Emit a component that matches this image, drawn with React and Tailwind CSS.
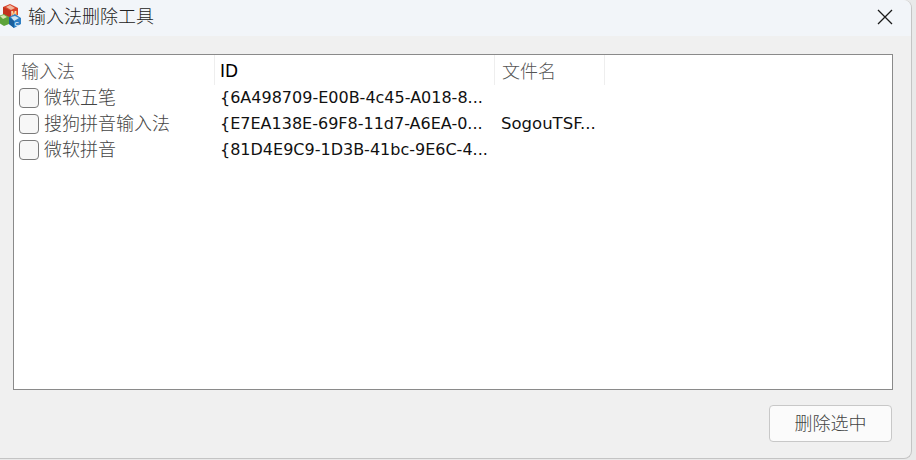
import React from "react";

const rows = [
  { name: "微软五笔", id: "{6A498709-E00B-4c45-A018-8...", file: "" },
  { name: "搜狗拼音输入法", id: "{E7EA138E-69F8-11d7-A6EA-0...", file: "SogouTSF..." },
  { name: "微软拼音", id: "{81D4E9C9-1D3B-41bc-9E6C-4...", file: "" },
];

const cjk = "font-['Noto_Sans_CJK_SC',sans-serif] font-light";
const latin = "font-['DejaVu_Sans','Noto_Sans_CJK_SC',sans-serif]";

function AppIcon() {
  return (
    <svg width="22" height="26" viewBox="0 0 22 26" className="shrink-0 -ml-[1px] -mt-[6px]">
      <path d="M4 5 L11 2 L19 6 L19 13 L12 16 L4 12 Z" fill="#d9442c" />
      <path d="M4 5 L12 9 L12 16 L4 12 Z" fill="#c2331d" />
      <path d="M7 5 L11 3 L16 6 L12 8 Z" fill="#f0b89f" />
      <text x="12" y="14" fontSize="7" fontWeight="700" fill="#ffe9b0" fontFamily="Liberation Sans">M</text>
      <path d="M0 14 L5 12 L10 15 L10 22 L5 24 L0 21 Z" fill="#5da33a" />
      <path d="M1 14 L5 13 L8 15 L4 17 Z" fill="#d8e8b0" />
      <path d="M10 15 L16 12 L22 16 L22 22 L15 26 L10 22 Z" fill="#2f7fc4" />
      <path d="M12 15 L16 14 L20 16 L15 19 Z" fill="#cde3f2" />
      <path d="M10 15 L15 19 L15 26 L10 22 Z" fill="#1c5f9c" />
      <text x="15.5" y="24" fontSize="6" fontWeight="700" fill="#e8f3fb" fontFamily="Liberation Sans">C</text>
    </svg>
  );
}

export default function App() {
  return (
    <div className="w-[916px] h-[460px] bg-[#e9e9e9] overflow-hidden">
      <div className="w-[912px] h-[459px] bg-[#f0f0f0] rounded-br-lg rounded-tr-lg border-r border-b border-[#c4c4c4] flex flex-col">
        <div className="h-[36px] shrink-0 bg-[#f2f5f9] rounded-tr-lg flex items-center">
          <AppIcon />
          <div className={`ml-[7px] -mt-[7px] text-[18px] leading-[24px] text-[#222] ${cjk}`}>输入法删除工具</div>
          <svg width="16" height="16" viewBox="0 0 16 16" className="ml-auto mr-[18px] -mt-[2px]">
            <path d="M1 1 L15 15 M15 1 L1 15" stroke="#1a1a1a" strokeWidth="1.3" fill="none" />
          </svg>
        </div>

        <div className="mt-[18px] ml-[13px] w-[880px] h-[336px] shrink-0 bg-white border border-[#8a8a8a]">
          <div className="flex h-[30px] text-[#555]">
            <div className={`w-[201px] pl-[7px] pt-[1px] flex items-center border-r border-[#eeeeee] text-[18px] ${cjk}`}>输入法</div>
            <div className={`w-[280px] pl-[5px] pt-[3px] flex items-center border-r border-[#eeeeee] text-[17px] text-black ${latin}`}>ID</div>
            <div className={`w-[110px] pl-[7px] pt-[1px] flex items-center border-r border-[#eeeeee] text-[18px] ${cjk}`}>文件名</div>
          </div>
          {rows.map((row) => (
            <div key={row.id} className="flex h-[26px]">
              <div className={`w-[201px] pl-[5px] flex items-center gap-[5px] text-[18px] text-[#444] ${cjk}`}>
                <span className="w-[20px] h-[20px] rounded-[4px] border border-[#7a7a7a] bg-[#f7f7f7]" />
                <span className="-mt-[3px]">{row.name}</span>
              </div>
              <div className={`w-[280px] pl-[5px] flex items-center whitespace-nowrap text-[16px] text-[#111] ${latin}`}>{row.id}</div>
              <div className={`w-[110px] pl-[6px] flex items-center whitespace-nowrap text-[16.5px] text-[#111] ${latin}`}>{row.file}</div>
            </div>
          ))}
        </div>

        <div className="flex justify-end mt-[15px] mr-[19px]">
          <button className={`w-[123px] h-[37px] pb-[4px] bg-[#fbfbfb] border border-[#c8c8c8] rounded-[4px] text-[18px] leading-[24px] text-[#444] ${cjk}`}>
            删除选中
          </button>
        </div>
      </div>
    </div>
  );
}
